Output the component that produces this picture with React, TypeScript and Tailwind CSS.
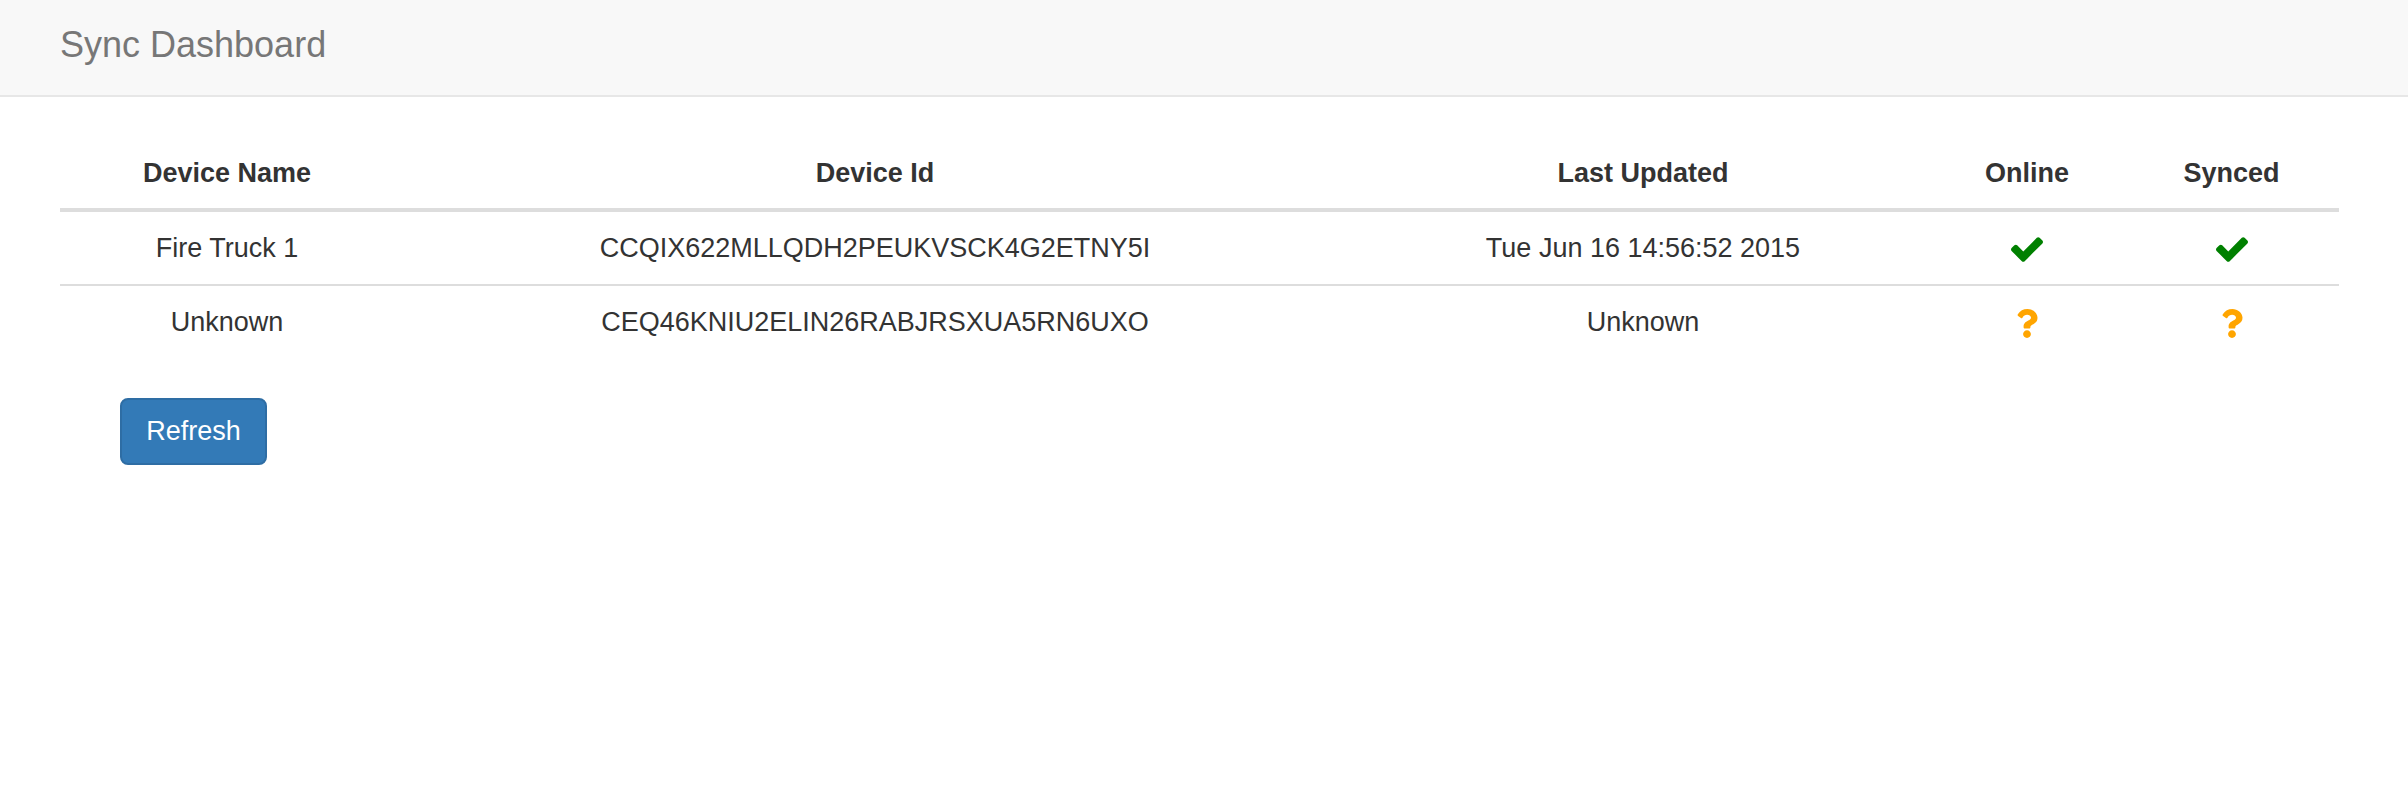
import React from 'react';
import { FaQuestion } from 'react-icons/fa';

type Device = {
  name: string;
  id: string;
  updated: string;
  online: boolean | null;
  synced: boolean | null;
};

const devices: Device[] = [
  {
    name: 'Fire Truck 1',
    id: 'CCQIX622MLLQDH2PEUKVSCK4G2ETNY5I',
    updated: 'Tue Jun 16 14:56:52 2015',
    online: true,
    synced: true,
  },
  {
    name: 'Unknown',
    id: 'CEQ46KNIU2ELIN26RABJRSXUA5RN6UXO',
    updated: 'Unknown',
    online: null,
    synced: null,
  },
];

const Check: React.FC = () => (
  <svg viewBox="121 334 1550 1188" className="inline-block w-[32px] h-[25px] fill-[#008000]">
    <path d="M1671 566q0 40-28 68l-724 724-136 136q-28 28-68 28t-68-28l-136-136-362-362q-28-28-28-68t28-68l136-136q28-28 68-28t68 28l294 295 656-657q28-28 68-28t68 28l136 136q28 28 28 68z" />
  </svg>
);

const Status: React.FC<{ value: boolean | null }> = ({ value }) => {
  if (value) return <Check />;
  return <FaQuestion className="inline-block w-[22px] h-[29px] text-[#ffa500]" />;
};

const App: React.FC = () => {
  return (
    <div className="min-h-screen bg-white text-[#333] font-['Liberation_Sans',Arial,sans-serif]">
      {/* Navbar */}
      <div className="h-[97px] bg-[#f8f8f8] border-b-2 border-[#e7e7e7] pl-[60px] pt-[27px]">
        <span className="text-[36px] leading-[36px] text-[#777]">Sync Dashboard</span>
      </div>

      <div className="pl-[60px] pr-[69px] pt-[42px]">
        <table className="w-full border-collapse text-[27px] leading-[39px] text-center">
          <thead>
            <tr className="border-b-4 border-[#ddd]">
              <th className="w-[334px] pt-[15px] pb-[15px] font-bold">Device Name</th>
              <th className="w-[962px] pt-[15px] pb-[15px] font-bold">Device Id</th>
              <th className="w-[574px] pt-[15px] pb-[15px] font-bold">Last Updated</th>
              <th className="w-[194px] pt-[15px] pb-[15px] font-bold">Online</th>
              <th className="pt-[15px] pb-[15px] font-bold">Synced</th>
            </tr>
          </thead>
          <tbody>
            {devices.map((d, i) => (
              <tr key={d.id} className={i > 0 ? 'border-t-2 border-[#ddd]' : ''}>
                <td className="pt-[17px] pb-[16px]">{d.name}</td>
                <td className="pt-[17px] pb-[16px]">{d.id}</td>
                <td className="pt-[17px] pb-[16px]">{d.updated}</td>
                <td className="pt-[17px] pb-[16px]">
                  <Status value={d.online} />
                </td>
                <td className="pt-[17px] pb-[16px]">
                  <Status value={d.synced} />
                </td>
              </tr>
            ))}
          </tbody>
        </table>

        <div className="pl-[60px] pt-[40px]">
          <button className="w-[147px] h-[67px] rounded-[8px] bg-[#337ab7] border-2 border-[#2e6da4] text-white text-[27px] leading-[39px]">
            Refresh
          </button>
        </div>
      </div>
    </div>
  );
};

export default App;
